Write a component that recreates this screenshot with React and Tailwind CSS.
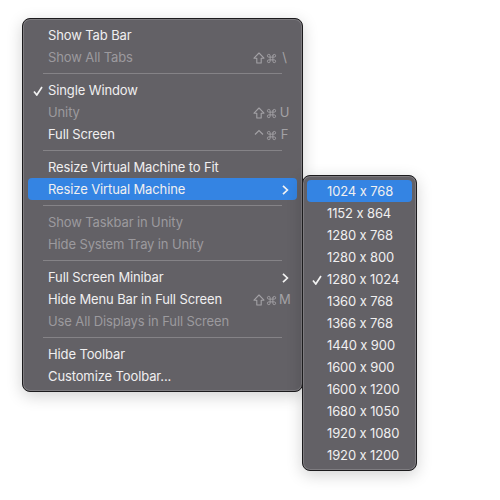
import React from 'react'
import { Command } from 'lucide-react'

const mainSections = [
  [
    { label: 'Show Tab Bar' },
    { label: 'Show All Tabs', disabled: true, keys: ['shift', 'cmd', '\\'] },
  ],
  [
    { label: 'Single Window', checked: true },
    { label: 'Unity', disabled: true, keys: ['shift', 'cmd', 'U'] },
    { label: 'Full Screen', keys: ['ctrl', 'cmd', 'F'] },
  ],
  [
    { label: 'Resize Virtual Machine to Fit' },
    { label: 'Resize Virtual Machine', active: true, arrow: true },
  ],
  [
    { label: 'Show Taskbar in Unity', disabled: true },
    { label: 'Hide System Tray in Unity', disabled: true },
  ],
  [
    { label: 'Full Screen Minibar', arrow: true },
    { label: 'Hide Menu Bar in Full Screen', keys: ['shift', 'cmd', 'M'] },
    { label: 'Use All Displays in Full Screen', disabled: true },
  ],
  [{ label: 'Hide Toolbar' }, { label: 'Customize Toolbar...' }],
]

const sizes = [
  '1024 x 768',
  '1152 x 864',
  '1280 x 768',
  '1280 x 800',
  '1280 x 1024',
  '1360 x 768',
  '1366 x 768',
  '1440 x 900',
  '1600 x 900',
  '1600 x 1200',
  '1680 x 1050',
  '1920 x 1080',
  '1920 x 1200',
]

function Check() {
  return (
    <svg width="10" height="10" viewBox="0 0 10 10" fill="none" className="absolute left-[-15px] top-[5px]">
      <path d="M1 5.5 L3.8 9 L9 1" stroke="#f2f2f2" strokeWidth="1.7" />
    </svg>
  )
}

function Arrow() {
  return (
    <svg width="7" height="10" viewBox="0 0 7 10" fill="none" className="ml-auto mr-[6px]">
      <path d="M1 0.8 L5.4 5 L1 9.2" stroke="#f2f2f2" strokeWidth="1.7" />
    </svg>
  )
}

function ShortcutKey({ name }) {
  if (name === 'shift') {
    return (
      <svg width="12" height="12" viewBox="0 0 12 12" fill="none" className="w-[13px] pr-[1px]">
        <path d="M6 1 L11 6.2 H8.2 V11 H3.8 V6.2 H1 Z" stroke="currentColor" strokeWidth="1.1" strokeLinejoin="round" />
      </svg>
    )
  }
  if (name === 'ctrl') {
    return (
      <svg width="12" height="12" viewBox="0 0 12 12" fill="none" className="w-[13px] pr-[1px]">
        <path d="M2 5.5 L6 1.5 L10 5.5" stroke="currentColor" strokeWidth="1.2" />
      </svg>
    )
  }
  if (name === 'cmd') {
    return (
      <span className="w-[13px]">
        <Command size={11} strokeWidth={2} />
      </span>
    )
  }
  return <span className="w-[11px] text-center">{name}</span>
}

function MenuItem({ item }) {
  const color = item.disabled ? 'text-[#9c9a9e]' : 'text-[#f0eff0]'
  return (
    <div className={`relative flex items-center h-[22px] pl-[20px] pr-[2px] pt-[2px] rounded-[4px] ${item.active ? 'bg-[#3484e3]' : ''} ${color}`}>
      <span className="relative">
        {item.checked && <Check />}
        {item.label}
      </span>
      {item.keys && (
        <span className="ml-auto mr-[5px] flex items-center text-[#a3a1a5]">
          {item.keys.map((k) => (
            <ShortcutKey key={k} name={k} />
          ))}
        </span>
      )}
      {item.arrow && <Arrow />}
    </div>
  )
}

function SizeMenu() {
  return (
    <div className="absolute left-[279px] top-[156px] w-[115px] rounded-[8px] border border-[#1c1b1d] bg-[#636166] px-[4px] py-[4px] shadow-[0_4px_16px_rgba(0,0,0,0.18),inset_0_0_0_1px_#7e7c80]">
      {sizes.map((size, i) => (
        <div
          key={size}
          className={`relative flex h-[22px] items-center rounded-[4px] pl-[20px] pt-[2px] text-[#f0eff0] ${i === 0 ? 'bg-[#3484e3]' : ''}`}
        >
          <span className="relative">
            {size === '1280 x 1024' && <Check />}
            {size}
          </span>
        </div>
      ))}
    </div>
  )
}

export default function App() {
  return (
    <div className="h-[500px] w-[500px] overflow-hidden bg-white pl-[22px] pt-[18px] font-['Inter',sans-serif] text-[13px] tracking-[-0.12px] [font-feature-settings:'calt'_0]">
      <div className="relative w-[281px] rounded-[8px] border border-[#1c1b1d] bg-[#636166] px-[5px] pt-[5px] pb-[4px] shadow-[0_4px_16px_rgba(0,0,0,0.18),inset_0_0_0_1px_#7e7c80]">
        {mainSections.map((section, i) => (
          <div key={i}>
            {i > 0 && (
              <div className="flex h-[11px] items-center px-[15px]">
                <div className="h-px w-full bg-[#858387]" />
              </div>
            )}
            {section.map((item) => (
              <MenuItem key={item.label} item={item} />
            ))}
          </div>
        ))}
        <SizeMenu />
      </div>
    </div>
  )
}
